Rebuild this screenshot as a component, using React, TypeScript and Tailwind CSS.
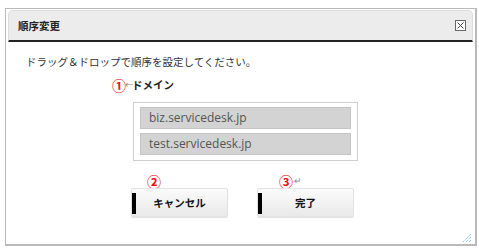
import React from 'react'

const jp = "font-['Meiryo','Noto_Sans_CJK_JP',sans-serif]"

function SortButton({ label }: { label: string }) {
  return (
    <button className="relative w-[97px] h-[29px] flex items-center justify-center rounded-[2px] border border-[#e2e2e2] bg-gradient-to-b from-[#fbfbfb] to-[#e9e9e9] shadow-[0_1px_1px_rgba(0,0,0,0.12)]">
      <span className="absolute left-0 top-[4px] w-[4px] h-[21px] bg-black" />
      <span className="text-[10.5px] font-bold text-[#111]">{label}</span>
    </button>
  )
}

function Marker({ n }: { n: string }) {
  return <span className="text-[14px] font-bold leading-none text-[#ee1111]">{n}</span>
}

export default function App() {
  const domains = ['biz.servicedesk.jp', 'test.servicedesk.jp']

  return (
    <div className={`w-[479px] h-[250px] bg-white ${jp}`}>
      <div className="ml-[5px] pt-[8px]">
        <div className="w-[472px] h-[238px] border border-[#b9b9b9] border-r-2 border-b-2 px-[2px] pt-[1px] flex flex-col">
          {/* header */}
          <div className="h-[32px] rounded-t-[5px] bg-[#ececec] border border-[#dcdcdc] border-b-2 border-b-[#222] flex items-center justify-between pl-[9px] pr-[6px]">
            <span className="text-[10.5px] font-bold text-[#222]">順序変更</span>
            <span className="w-[11px] h-[11px] border border-[#666] bg-white flex items-center justify-center">
              <svg width="9" height="9" viewBox="0 0 9 9">
                <path d="M1.5 1.5 L7.5 7.5 M7.5 1.5 L1.5 7.5" stroke="#444" strokeWidth="1" />
              </svg>
            </span>
          </div>

          {/* body */}
          <div className="flex-1 flex flex-col pl-[18px] pt-[13px] relative">
            <p className="text-[10.5px] text-[#333] leading-[14px]">ドラッグ＆ドロップで順序を設定してください。</p>

            <div className="mt-[8px] ml-[86px] flex items-center h-[16px]">
              <Marker n="①" />
              <span className="text-[8px] text-[#777] -ml-[1px] -mr-[1px]">←</span>
              <span className="text-[10.5px] font-bold text-[#222]">ドメイン</span>
            </div>

            <div className="mt-[9px] ml-[107px] w-[225px] h-[59px] border border-[#cfcfcf] bg-white flex flex-col gap-[4px] px-[6px] pt-[4px]">
              {domains.map(d => (
                <div key={d} className="h-[22px] bg-[#d3d3d3] border border-[#c4c4c4] flex items-center pl-[8px] font-['Open_Sans',sans-serif] text-[12px] text-[#555]">
                  {d}
                </div>
              ))}
            </div>

            <div className="mt-[12px] ml-[105px] flex gap-[29px]">
              <div className="flex flex-col">
                <div className="h-[15px] pl-[16px] flex items-center"><Marker n="②" /></div>
                <SortButton label="キャンセル" />
              </div>
              <div className="flex flex-col">
                <div className="h-[15px] pl-[22px] flex items-center">
                  <Marker n="③" />
                  <span className="text-[9px] text-[#888] ml-[1px]">↵</span>
                </div>
                <SortButton label="完了" />
              </div>
            </div>

            <svg className="absolute right-[1px] bottom-[1px]" width="11" height="11" viewBox="0 0 11 11">
              <path d="M10 2 L2 10 M10 5 L5 10 M10 8 L8 10" stroke="#5fb0e6" strokeWidth="1" strokeDasharray="1 1" />
            </svg>
          </div>
        </div>
      </div>
    </div>
  )
}
